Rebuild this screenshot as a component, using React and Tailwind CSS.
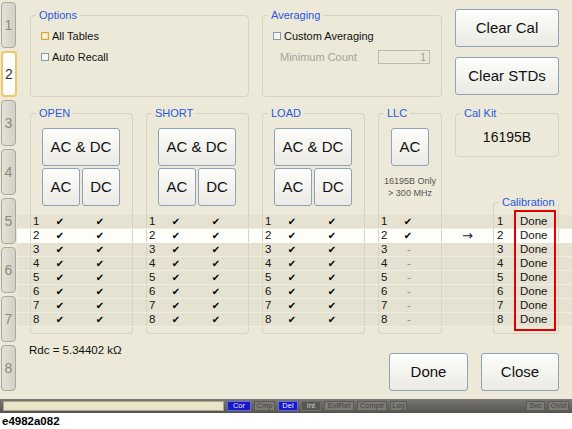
import React from "react";

const groupBorder = "border-[#D6D3C3]";

const Legend = ({ children, className = "" }) => (
  <legend
    className={`ml-[5px] px-[3px] text-[11px] leading-[12px] text-[#2A58E0] ${className}`}
  >
    {children}
  </legend>
);

const XpButton = ({ children, className = "" }) => (
  <button
    className={`flex items-center justify-center rounded-[3px] border border-[#8EA3B8] bg-gradient-to-b from-[#FDFDFB] to-[#EBEAE4] text-[15px] text-[#111] ${className}`}
  >
    {children}
  </button>
);

const Checkbox = ({ label, focused }) => (
  <div className="flex items-center h-[14px] text-[11px] text-[#111]">
    <span
      className={
        focused
          ? "w-[8px] h-[8px] border border-[#E3A53A] bg-[#FBF6E6] shadow-[inset_0_0_0_1px_#F6DFA8]"
          : "w-[8px] h-[8px] border border-[#7F9DB9] bg-[#F6F5F0]"
      }
    ></span>
    <span className="ml-[3px]">{label}</span>
  </div>
);

const Tab = ({ n, active }) => (
  <div
    className={
      active
        ? "w-[16px] h-[46px] rounded-[4px] border-2 border-[#F2C866] bg-white flex items-center justify-center text-[14px] text-[#333]"
        : "w-[15px] h-[46px] rounded-[4px] border border-[#ABA89E] bg-gradient-to-r from-[#E4E1D8] to-[#D3D0C6] flex items-center justify-center text-[14px] text-[#8A8884]"
    }
  >
    {n}
  </div>
);

const StdGroup = ({ title }) => (
  <fieldset
    className={`w-[103px] h-[108px] border border-b-0 ${groupBorder} rounded-t-[4px]`}
  >
    <Legend>{title}</Legend>
    <div className="pl-[11px] pt-[9px]">
      <XpButton className="w-[78px] h-[38px]">AC &amp; DC</XpButton>
      <div className="flex gap-[2px] mt-[2px]">
        <XpButton className="w-[38px] h-[38px]">AC</XpButton>
        <XpButton className="w-[38px] h-[38px]">DC</XpButton>
      </div>
    </div>
  </fieldset>
);

const Check = () => (
  <span className="w-[12px] text-center text-[10px] font-['DejaVu_Sans',sans-serif] text-black">
    ✔
  </span>
);

const StdCell = ({ n }) => (
  <div className={`w-[103px] border-x ${groupBorder} flex items-center pl-[2px]`}>
    <span className="w-[21px]">{n}</span>
    <Check />
    <span className="w-[28px]"></span>
    <Check />
  </div>
);

const Gap = ({ w = "w-[13px]" }) => <div className={w}></div>;

const Row = ({ n }) => {
  const hi = n === 2;
  return (
    <div
      className={`flex h-[14px] border-b text-[11.5px] leading-[13px] text-[#151515] ${
        hi ? "bg-[#FDFDFA] border-[#FDFDFA]" : "bg-[#E5E2D1] border-[#EFEDE2]"
      }`}
    >
      <Gap />
      <StdCell n={n} />
      <Gap />
      <StdCell n={n} />
      <Gap />
      <StdCell n={n} />
      <Gap />
      <div className={`w-[64px] border-x ${groupBorder} flex items-center pl-[2px]`}>
        <span className="w-[21px]">{n}</span>
        {n <= 2 ? (
          <Check />
        ) : (
          <span className="w-[14px] text-center text-[#8A8A86]">-</span>
        )}
      </div>
      <div className="w-[51px] flex items-center justify-center">
        {hi ? (
          <span className="text-[13px] leading-[13px] text-[#222] font-['DejaVu_Sans',sans-serif]">
            →
          </span>
        ) : null}
      </div>
      <div className={`w-[66px] border-x ${groupBorder} flex items-center pl-[3px]`}>
        <span className="w-[23px]">{n}</span>
        <span>Done</span>
      </div>
      <Gap />
    </div>
  );
};

const Footer = () => {
  const cell = `border-x border-b ${groupBorder} rounded-b-[4px] h-[7px]`;
  return (
    <div className="flex">
      <Gap />
      <div className={`w-[103px] ${cell}`}></div>
      <Gap />
      <div className={`w-[103px] ${cell}`}></div>
      <Gap />
      <div className={`w-[103px] ${cell}`}></div>
      <Gap />
      <div className={`w-[64px] ${cell}`}></div>
      <Gap w="w-[51px]" />
      <div className={`w-[66px] ${cell}`}></div>
    </div>
  );
};

const Indicator = ({ label, kind, w }) => {
  const styles = {
    blue: "bg-[#1818C4] border-[#6A6AE0] text-[#E4E4FF]",
    dim: "bg-[#7C7B77] border-[#5C5B58] text-[#46453F]",
    dark: "bg-[#575653] border-[#6E6D6A] text-[#D0D0CC]",
  };
  return (
    <div
      className={`${w} h-[10px] border flex items-center justify-center text-[7.5px] leading-[8px] ${styles[kind]}`}
    >
      {label}
    </div>
  );
};

export default function App() {
  return (
    <div className="relative w-[572px] h-[429px] bg-white font-['Liberation_Sans',Arial,sans-serif] overflow-hidden">
      <div className="flex h-[399px] bg-[#ECE9D8]">
        {/* tabs */}
        <div className="w-[17px] flex flex-col gap-[3px] pt-[2px] pl-[1px]">
          {[1, 2, 3, 4, 5, 6, 7, 8].map((n) => (
            <Tab key={n} n={n} active={n === 2} />
          ))}
        </div>

        {/* panel */}
        <div className="w-[555px] flex flex-col">
          {/* top */}
          <div className="flex gap-[13px] pl-[13px] pt-[9px] h-[107px]">
            <fieldset className={`w-[219px] h-[88px] border ${groupBorder} rounded-[4px]`}>
              <Legend>Options</Legend>
              <div className="pl-[10px] pt-[8px] flex flex-col gap-[7px]">
                <Checkbox label="All Tables" focused />
                <Checkbox label="Auto Recall" />
              </div>
            </fieldset>
            <fieldset className={`w-[180px] h-[88px] border ${groupBorder} rounded-[4px]`}>
              <Legend>Averaging</Legend>
              <div className="pl-[10px] pt-[8px] flex flex-col gap-[7px]">
                <Checkbox label="Custom Averaging" />
                <div className="flex items-center h-[14px] text-[11px] text-[#A3A29C]">
                  <span className="ml-[7px] w-[98px]">Minimum Count</span>
                  <div className="w-[52px] h-[14px] border border-[#BDBBAF] flex items-center justify-end pr-[3px] text-[11px] leading-[12px]">
                    1
                  </div>
                </div>
              </div>
            </fieldset>
            <div className="flex flex-col gap-[10px]">
              <XpButton className="w-[104px] h-[38px]">Clear Cal</XpButton>
              <XpButton className="w-[104px] h-[38px]">Clear STDs</XpButton>
            </div>
          </div>

          {/* group headers */}
          <div className="flex gap-[13px] pl-[13px] h-[108px]">
            <StdGroup title="OPEN" />
            <StdGroup title="SHORT" />
            <StdGroup title="LOAD" />
            <fieldset
              className={`w-[64px] h-[108px] border border-b-0 ${groupBorder} rounded-t-[4px]`}
            >
              <Legend>LLC</Legend>
              <div className="pl-[12px] pt-[9px]">
                <XpButton className="w-[38px] h-[38px]">AC</XpButton>
              </div>
              <div className="mt-[9px] text-center text-[9px] leading-[12px] text-[#555]">
                <div>16195B Only</div>
                <div>&gt; 300 MHz</div>
              </div>
            </fieldset>
            <div className="w-[117px] h-[108px] flex flex-col">
              <fieldset className={`w-[104px] h-[50px] border ${groupBorder} rounded-[4px]`}>
                <Legend>Cal Kit</Legend>
                <div className="pt-[10px] text-center text-[14px] leading-[16px] text-[#111]">
                  16195B
                </div>
              </fieldset>
              <fieldset
                className={`mt-auto ml-[38px] w-[66px] h-[19px] border border-b-0 ${groupBorder} rounded-t-[4px]`}
              >
                <Legend>Calibration</Legend>
              </fieldset>
            </div>
          </div>

          {/* table rows */}
          <div className="flex flex-col">
            {[1, 2, 3, 4, 5, 6, 7, 8].map((n) => (
              <Row key={n} n={n} />
            ))}
          </div>
          <Footer />

          {/* bottom */}
          <div className="flex flex-1">
            <div className="pl-[12px] pt-[9px] text-[11.5px] leading-[14px] text-[#111]">
              Rdc = 5.34402 kΩ
            </div>
            <div className="ml-auto pt-[19px] pr-[13px] flex gap-[13px]">
              <XpButton className="w-[79px] h-[38px]">Done</XpButton>
              <XpButton className="w-[78px] h-[38px]">Close</XpButton>
            </div>
          </div>
        </div>
      </div>

      {/* status bar */}
      <div className="h-[14px] flex items-center gap-[3px] px-[3px] bg-gradient-to-b from-[#7A7874] to-[#56544F]">
        <div className="w-[221px] h-[10px] border border-[#A9A78F] bg-[#E7E5C6]"></div>
        <Indicator label="Cor" kind="blue" w="w-[24px]" />
        <Indicator label="Cmp" kind="dim" w="w-[21px]" />
        <Indicator label="Del" kind="blue" w="w-[20px]" />
        <Indicator label="Int" kind="dark" w="w-[20px]" />
        <Indicator label="ExtRef" kind="dim" w="w-[30px]" />
        <Indicator label="Comptr" kind="dim" w="w-[30px]" />
        <Indicator label="Log" kind="dim" w="w-[17px]" />
        <div className="flex-1"></div>
        <Indicator label="Svc" kind="dim" w="w-[19px]" />
        <Indicator label="Ovld" kind="dim" w="w-[21px]" />
      </div>

      <div className="pl-[2px] pt-[2px] text-[11.5px] leading-[13px] font-bold text-black">
        e4982a082
      </div>

      {/* highlight around the calibration status */}
      <div className="absolute left-[514px] top-[210px] w-[42px] h-[121px] border-2 border-[#E00000]"></div>
    </div>
  );
}
